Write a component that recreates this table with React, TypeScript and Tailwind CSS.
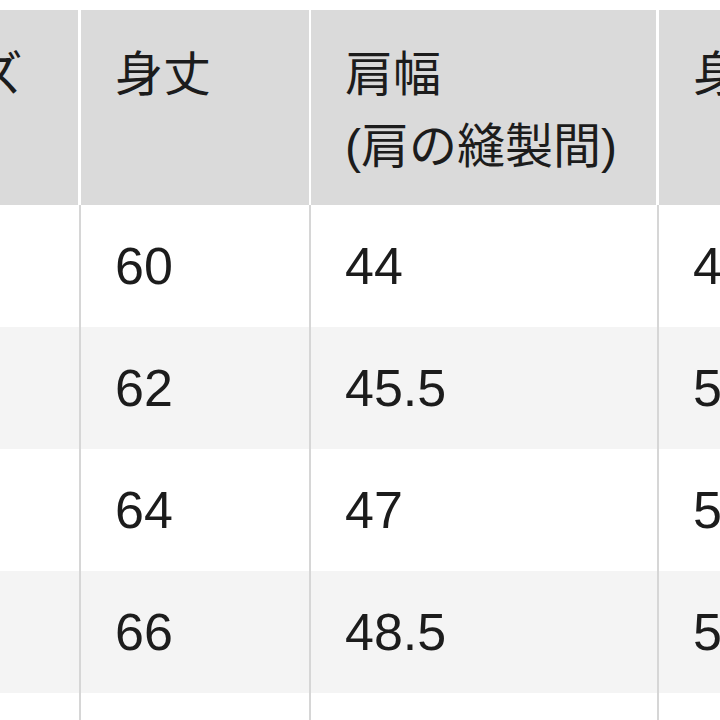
const rows = [
  { size: "S", length: "60", shoulder: "44", width: "49" },
  { size: "M", length: "62", shoulder: "45.5", width: "52" },
  { size: "L", length: "64", shoulder: "47", width: "55" },
  { size: "XL", length: "66", shoulder: "48.5", width: "58" },
  { size: "XXL", length: "68", shoulder: "50", width: "61" },
];

const widths = ["w-[235px]", "w-[230px]", "w-[348px]", "w-[230px]"];

export default function App() {
  return (
    <div className="w-full h-screen overflow-hidden bg-white font-['Liberation_Sans','Noto_Sans_CJK_JP',sans-serif] text-[#1c1c1c]">
      <div className="ml-[-154px] pt-[10px] w-[1100px]">
        {/* header */}
        <div className="flex bg-[#dadada] h-[195px] text-[48px] leading-[72px]">
          <div className={`${widths[0]} shrink-0 border-r-[3px] border-white pl-[34px] pt-[29px]`}>サイズ</div>
          <div className={`${widths[1]} shrink-0 border-r-2 border-white pl-[34px] pt-[29px]`}>身丈</div>
          <div className={`${widths[2]} shrink-0 border-r-[3px] border-white pl-[34px] pt-[29px]`}>
            肩幅
            <br />
            (肩の縫製間)
          </div>
          <div className={`${widths[3]} shrink-0 pl-[34px] pt-[29px]`}>身幅</div>
        </div>

        {/* body */}
        {rows.map((r, i) => (
          <div key={r.size} className={`flex h-[122px] text-[52px] ${i % 2 === 1 ? "bg-[#f4f4f4]" : "bg-white"}`}>
            <div className={`${widths[0]} shrink-0 border-r-2 border-[#d6d6d6] pl-[34px] flex items-center`}>{r.size}</div>
            <div className={`${widths[1]} shrink-0 border-r-2 border-[#d6d6d6] pl-[34px] flex items-center`}>{r.length}</div>
            <div className={`${widths[2]} shrink-0 border-r-2 border-[#d6d6d6] pl-[34px] flex items-center`}>{r.shoulder}</div>
            <div className={`${widths[3]} shrink-0 pl-[34px] flex items-center`}>{r.width}</div>
          </div>
        ))}
      </div>
    </div>
  );
}
